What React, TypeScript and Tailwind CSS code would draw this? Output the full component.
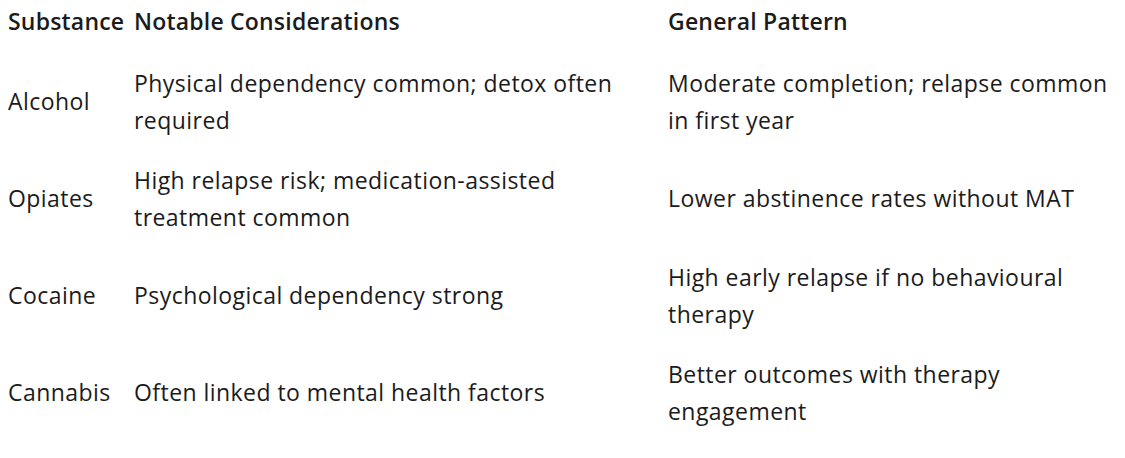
import React from 'react';

type Row = {
    substance: string;
    considerations: string;
    pattern: string;
};

const ROWS: Row[] = [
    {
        substance: 'Alcohol',
        considerations: 'Physical dependency common; detox often required',
        pattern: 'Moderate completion; relapse common in first year',
    },
    {
        substance: 'Opiates',
        considerations: 'High relapse risk; medication-assisted treatment common',
        pattern: 'Lower abstinence rates without MAT',
    },
    {
        substance: 'Cocaine',
        considerations: 'Psychological dependency strong',
        pattern: 'High early relapse if no behavioural therapy',
    },
    {
        substance: 'Cannabis',
        considerations: 'Often linked to mental health factors',
        pattern: 'Better outcomes with therapy engagement',
    },
];

export default function App() {
    return (
        <div
            className="w-[1125px] h-[458px] bg-white text-[#1b1b1b] text-[23px] leading-[37px] tracking-[0.45px] overflow-hidden"
            style={{ fontFamily: '"Open Sans", "Noto Sans", sans-serif' }}
        >
            <table className="table-fixed border-collapse ml-[8px]">
                <colgroup>
                    <col className="w-[126px]" />
                    <col className="w-[534px]" />
                    <col className="w-[452px]" />
                </colgroup>
                <thead>
                    <tr className="h-[53px] align-top">
                        <th className="text-left font-semibold tracking-[0.2px] pt-[3px]">Substance</th>
                        <th className="text-left font-semibold tracking-[0.2px] pt-[3px]">Notable Considerations</th>
                        <th className="text-left font-semibold tracking-[0.2px] pt-[3px]">General Pattern</th>
                    </tr>
                </thead>
                <tbody>
                    {ROWS.map((row) => (
                        <tr key={row.substance} className="h-[97px] align-middle">
                            <td className="pr-2">{row.substance}</td>
                            <td className="pr-6">{row.considerations}</td>
                            <td>{row.pattern}</td>
                        </tr>
                    ))}
                </tbody>
            </table>
        </div>
    );
}
